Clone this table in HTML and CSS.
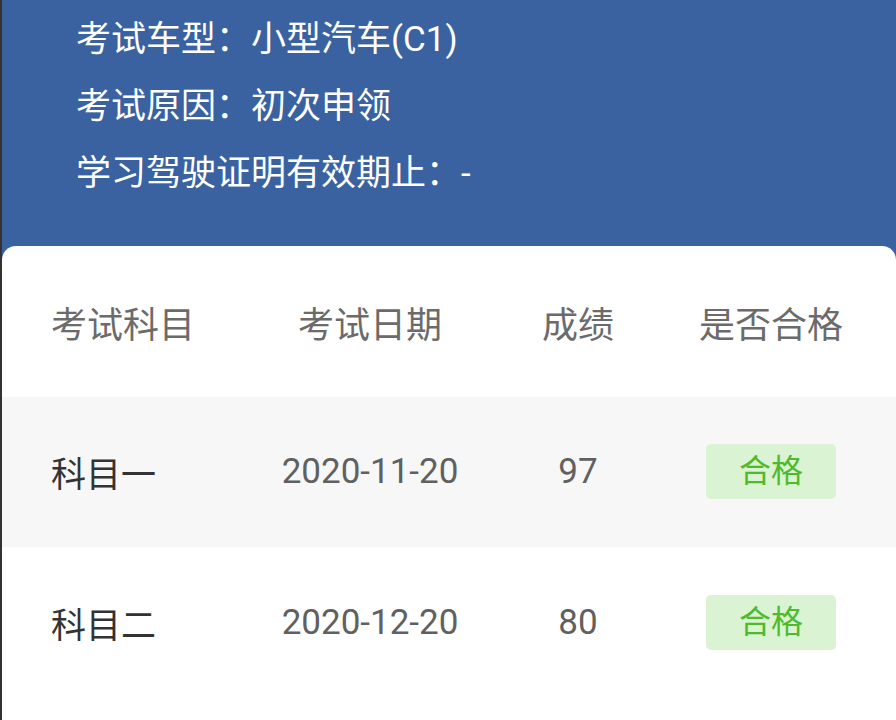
FILE: index.html
```html
<!DOCTYPE html>
<html lang="zh-CN">
<head>
<meta charset="utf-8">
<link rel="stylesheet" href="styles.css">
</head>
<body>
<div class="page">
  <section class="info">
    <div class="info-line">考试车型：小型汽车(C1)</div>
    <div class="info-line">考试原因：初次申领</div>
    <div class="info-line">学习驾驶证明有效期止：-</div>
  </section>
  <section class="card">
    <div class="row head">
      <div class="c1">考试科目</div>
      <div class="c2">考试日期</div>
      <div class="c3">成绩</div>
      <div class="c4">是否合格</div>
    </div>
    <div class="row shaded">
      <div class="c1 subject">科目一</div>
      <div class="c2 num">2020-11-20</div>
      <div class="c3 num">97</div>
      <div class="c4"><span class="badge">合格</span></div>
    </div>
    <div class="row">
      <div class="c1 subject">科目二</div>
      <div class="c2 num">2020-12-20</div>
      <div class="c3 num">80</div>
      <div class="c4"><span class="badge">合格</span></div>
    </div>
  </section>
</div>
</body>
</html>
```
FILE: styles.css
```css
html, body {
  margin: 0;
  padding: 0;
}
body {
  width: 896px;
  height: 720px;
  overflow: hidden;
  font-family: Roboto, "Noto Sans CJK SC", "Noto Sans", sans-serif;
  background: #3b62a0;
}
.page {
  border-left: 2px solid #333;
  height: 720px;
  box-sizing: border-box;
  display: flex;
  flex-direction: column;
}
.info {
  height: 246px;
  box-sizing: border-box;
  padding: 6px 0 0 74px;
  color: #ffffff;
  font-size: 35px;
}
.info-line {
  line-height: 67px;
  white-space: nowrap;
}
.card {
  flex: 1;
  background: #ffffff;
  border-radius: 14px 14px 0 0;
}
.row {
  display: grid;
  grid-template-columns: 219px 200px 216px 170px;
  padding-left: 49px;
  height: 150px;
  align-items: center;
}
.row.head {
  height: 151px;
  color: #6b6b6b;
  font-size: 36px;
}
.row.shaded {
  height: 148px;
  padding-bottom: 2px;
  background: #f7f7f7;
}
.c2, .c3, .c4 {
  text-align: center;
}
.subject {
  color: #333;
  font-size: 35px;
}
.num {
  color: #606060;
  font-size: 35px;
}
.badge {
  display: inline-block;
  width: 130px;
  height: 55px;
  line-height: 55px;
  border-radius: 5px;
  background: #daf3d2;
  color: #4fba2c;
  font-size: 32px;
  text-align: center;
}
```
